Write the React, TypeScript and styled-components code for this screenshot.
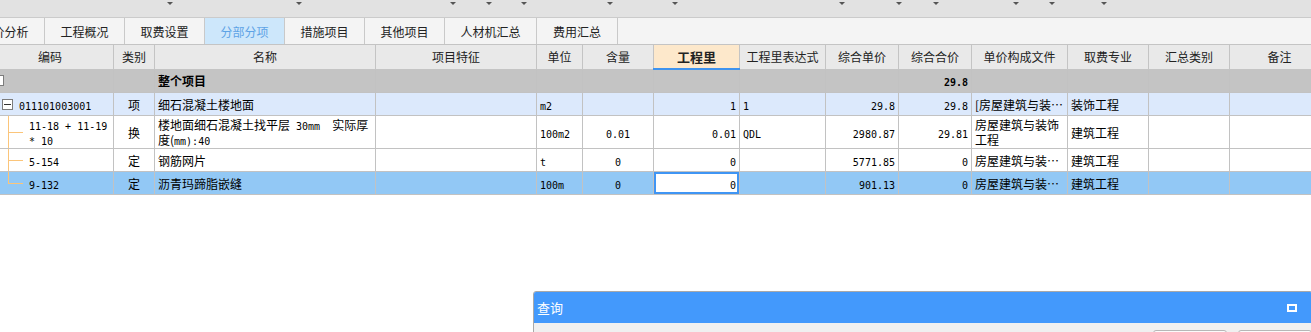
import React from "react";
import styled, { createGlobalStyle } from "styled-components";

const GlobalStyle = createGlobalStyle`
  html, body {
    margin: 0;
    padding: 0;
    background: #fff;
    overflow: hidden;
  }
  body {
    font-family: "Noto Sans CJK SC", "Noto Sans", sans-serif;
    font-size: 12px;
    color: #000;
  }
`;

const Page = styled.div`
  position: relative;
  width: 1311px;
  height: 332px;
  overflow: hidden;
`;

const Toolbar = styled.div`
  display: flex;
  height: 18px;
  box-sizing: border-box;
  background: #e2e2e2;
  border-bottom: 1px solid #cbcbcb;
`;

const ToolBtn = styled.div<{ $w: number }>`
  width: ${(p) => p.$w}px;
  flex: none;
  display: flex;
  justify-content: flex-end;
  align-items: flex-start;
`;

const Arrow = styled.span`
  margin-top: 2px;
  width: 0;
  height: 0;
  border-left: 3px solid transparent;
  border-right: 3px solid transparent;
  border-top: 3px solid #555;
`;

const TabBar = styled.div`
  display: flex;
  height: 26px;
  background: #f4f4f4;
  overflow: hidden;
`;

const TabStrip = styled.div`
  display: flex;
  margin-left: -35px;
`;

const Tab = styled.div<{ $w: number; $active?: boolean }>`
  width: ${(p) => p.$w}px;
  box-sizing: border-box;
  flex: none;
  display: flex;
  align-items: center;
  justify-content: center;
  border-right: 1px solid #c9c9c9;
  background: ${(p) => (p.$active ? "#cde7fb" : "transparent")};
  color: ${(p) => (p.$active ? "#5ea3e6" : "#222")};
  font-size: 12px;
`;

const GridWrap = styled.div`
  overflow: hidden;
`;

const Grid = styled.table`
  margin-left: -14px;
  border-collapse: collapse;
  table-layout: fixed;
  width: 1343px;
`;

const Head = styled.th<{ $hot?: boolean }>`
  height: 23px;
  padding: 0 2px;
  background: ${(p) => (p.$hot ? "#fde8cb" : "#e9e9e9")};
  border: 1px solid #c4c4c4;
  border-bottom: ${(p) => (p.$hot ? "2px solid #3f93ee" : "1px solid #c4c4c4")};
  color: #222;
  font-weight: ${(p) => (p.$hot ? 700 : 400)};
  font-size: ${(p) => (p.$hot ? "13px" : "12px")};
  white-space: nowrap;
  overflow: hidden;
`;

type Tone = "total" | "item" | "plain" | "sel";

const toneBg: Record<Tone, string> = {
  total: "#c4c4c4",
  item: "#dce9fc",
  plain: "#ffffff",
  sel: "#92c8f5",
};

const Row = styled.tr<{ $tone: Tone }>`
  background: ${(p) => toneBg[p.$tone]};
`;

const Cell = styled.td<{ $h: number; $align?: string; $clip?: boolean; $focus?: boolean; $bold?: boolean }>`
  height: ${(p) => p.$h}px;
  padding: 0 3px;
  border: 1px solid #c2c2c2;
  text-align: ${(p) => p.$align || "left"};
  vertical-align: middle;
  line-height: 15px;
  font-weight: ${(p) => (p.$bold ? 700 : 400)};
  white-space: ${(p) => (p.$clip ? "nowrap" : "normal")};
  overflow: hidden;
  text-overflow: ellipsis;
  ${(p) => (p.$focus ? "background: #fff; box-shadow: inset 0 0 0 2px #3f95f4;" : "")}
`;

const CodeCell = styled.td`
  padding: 0;
  border: 1px solid #c2c2c2;
  vertical-align: middle;
`;

const CodeWrap = styled.div<{ $h: number }>`
  display: flex;
  align-items: center;
  height: ${(p) => p.$h}px;
  line-height: 15px;
  overflow: hidden;
`;

const M = styled.span`
  font-family: "DejaVu Sans Mono", "Liberation Mono", monospace;
  font-size: 10px;
  line-height: 1;
  white-space: pre-wrap;
`;

const Check = styled.span`
  flex: none;
  width: 11px;
  height: 11px;
  box-sizing: border-box;
  margin-left: 6px;
  border: 1px solid #7c7c7c;
  background: #fff;
`;

const Fold = styled.span`
  flex: none;
  width: 11px;
  height: 11px;
  box-sizing: border-box;
  margin: 0 6px 0 15px;
  border: 1px solid #7c7c7c;
  background: #fff;
  display: flex;
  align-items: center;
  justify-content: center;
  &::after {
    content: "";
    width: 7px;
    height: 1px;
    background: #333;
  }
`;

const Guide = styled.span<{ $last?: boolean }>`
  flex: none;
  align-self: stretch;
  width: 15px;
  margin: 0 6px 0 21px;
  background:
    linear-gradient(#fbc57a, #fbc57a) 0 50% / 15px 1px no-repeat,
    linear-gradient(#fbc57a, #fbc57a) 0 0 / 1px ${(p) => (p.$last ? "50%" : "100%")} no-repeat;
`;

const CodeText = styled.span`
  padding-right: 4px;
`;

const Dialog = styled.div`
  position: absolute;
  left: 533px;
  top: 291px;
  right: -2px;
  height: 80px;
  border: 1px solid #a9a9a9;
  border-radius: 3px 3px 0 0;
  background: #f0f0f0;
  overflow: hidden;
`;

const DialogHead = styled.div`
  height: 31px;
  background: #4399fc;
  display: flex;
  align-items: center;
  justify-content: space-between;
  padding: 0 15px 0 3px;
  color: #fff;
  font-size: 13px;
`;

const MaxIcon = styled.span`
  width: 10px;
  height: 8px;
  box-sizing: border-box;
  border: 2px solid #fff;
`;

const DialogBody = styled.div`
  display: flex;
  gap: 11px;
  padding: 7px 0 0 619px;
`;

const DlgButton = styled.div`
  width: 79px;
  height: 24px;
  box-sizing: border-box;
  border: 1px solid #b7b7b7;
  border-radius: 3px;
  background: #fbfbfb;
`;

const toolWidths = [173, 129, 154, 36, 35, 86, 65, 167, 57, 37, 80, 36, 52];

const tabs = [
  { t: "造价分析", w: 80 },
  { t: "工程概况", w: 80 },
  { t: "取费设置", w: 80 },
  { t: "分部分项", w: 80, active: true },
  { t: "措施项目", w: 80 },
  { t: "其他项目", w: 80 },
  { t: "人材机汇总", w: 92 },
  { t: "费用汇总", w: 81 },
];

const cols = [
  { t: "编码", w: 127 },
  { t: "类别", w: 41 },
  { t: "名称", w: 221 },
  { t: "项目特征", w: 161 },
  { t: "单位", w: 46 },
  { t: "含量", w: 71 },
  { t: "工程里", w: 86, hot: true },
  { t: "工程里表达式", w: 86 },
  { t: "综合单价", w: 73 },
  { t: "综合合价", w: 73 },
  { t: "单价构成文件", w: 96 },
  { t: "取费专业", w: 81 },
  { t: "汇总类别", w: 81 },
  { t: "备注", w: 100 },
];

type Line = {
  tone: Tone;
  h: number;
  kind: "root" | "item" | "child" | "last";
  code?: string;
  cat?: string;
  name?: React.ReactNode;
  unit?: string;
  qty?: string;
  amount?: string;
  expr?: string;
  price?: string;
  total?: string;
  file?: string;
  fileWrap?: boolean;
  major?: string;
  focus?: boolean;
};

const lines: Line[] = [
  { tone: "total", h: 22, kind: "root", name: "整个项目", total: "29.8" },
  {
    tone: "item",
    h: 22,
    kind: "item",
    code: "011101003001",
    cat: "项",
    name: "细石混凝土楼地面",
    unit: "m2",
    amount: "1",
    expr: "1",
    price: "29.8",
    total: "29.8",
    file: "[房屋建筑与装饰工程]",
    major: "装饰工程",
  },
  {
    tone: "plain",
    h: 32,
    kind: "child",
    code: "11-18 + 11-19 * 10",
    cat: "换",
    name: (
      <>
        楼地面细石混凝土找平层<M> 30mm  </M>实际厚度(<M>mm):40</M>
      </>
    ),
    unit: "100m2",
    qty: "0.01",
    amount: "0.01",
    expr: "QDL",
    price: "2980.87",
    total: "29.81",
    file: "房屋建筑与装饰工程",
    fileWrap: true,
    major: "建筑工程",
  },
  {
    tone: "plain",
    h: 22,
    kind: "child",
    code: "5-154",
    cat: "定",
    name: "钢筋网片",
    unit: "t",
    qty: "0",
    amount: "0",
    price: "5771.85",
    total: "0",
    file: "房屋建筑与装饰工程",
    major: "建筑工程",
  },
  {
    tone: "sel",
    h: 22,
    kind: "last",
    code: "9-132",
    cat: "定",
    name: "沥青玛蹄脂嵌缝",
    unit: "100m",
    qty: "0",
    amount: "0",
    price: "901.13",
    total: "0",
    file: "房屋建筑与装饰工程",
    major: "建筑工程",
    focus: true,
  },
];

function CodeContent({ line }: { line: Line }) {
  if (line.kind === "root") return <Check />;
  return (
    <>
      {line.kind === "item" ? <Fold /> : <Guide $last={line.kind === "last"} />}
      <CodeText>
        <M>{line.code}</M>
      </CodeText>
    </>
  );
}

export default function App() {
  return (
    <Page>
      <GlobalStyle />
      <Toolbar>
        {toolWidths.map((w, i) => (
          <ToolBtn key={i} $w={w}>
            <Arrow />
          </ToolBtn>
        ))}
      </Toolbar>
      <TabBar>
        <TabStrip>
          {tabs.map((tab) => (
            <Tab key={tab.t} $w={tab.w} $active={tab.active}>
              {tab.t}
            </Tab>
          ))}
        </TabStrip>
      </TabBar>
      <GridWrap>
        <Grid>
          <colgroup>
            {cols.map((c) => (
              <col key={c.t} style={{ width: c.w }} />
            ))}
          </colgroup>
          <thead>
            <tr>
              {cols.map((c) => (
                <Head key={c.t} $hot={c.hot}>
                  {c.t}
                </Head>
              ))}
            </tr>
          </thead>
          <tbody>
            {lines.map((l, i) => (
              <Row key={i} $tone={l.tone}>
                <CodeCell>
                  <CodeWrap $h={l.h}>
                    <CodeContent line={l} />
                  </CodeWrap>
                </CodeCell>
                <Cell $h={l.h} $align="center">{l.cat}</Cell>
                <Cell $h={l.h} $bold={l.kind === "root"}>{l.name}</Cell>
                <Cell $h={l.h} />
                <Cell $h={l.h}>
                  <M>{l.unit}</M>
                </Cell>
                <Cell $h={l.h} $align="center">
                  <M>{l.qty}</M>
                </Cell>
                <Cell $h={l.h} $align="right" $focus={l.focus}>
                  <M>{l.amount}</M>
                </Cell>
                <Cell $h={l.h}>
                  <M>{l.expr}</M>
                </Cell>
                <Cell $h={l.h} $align="right">
                  <M>{l.price}</M>
                </Cell>
                <Cell $h={l.h} $align="right" $bold={l.kind === "root"}>
                  <M>{l.total}</M>
                </Cell>
                <Cell $h={l.h} $clip={!l.fileWrap}>{l.file}</Cell>
                <Cell $h={l.h} $clip>{l.major}</Cell>
                <Cell $h={l.h} />
                <Cell $h={l.h} />
              </Row>
            ))}
          </tbody>
        </Grid>
      </GridWrap>
      <Dialog>
        <DialogHead>
          <span>查询</span>
          <MaxIcon />
        </DialogHead>
        <DialogBody>
          <DlgButton />
          <DlgButton />
        </DialogBody>
      </Dialog>
    </Page>
  );
}
